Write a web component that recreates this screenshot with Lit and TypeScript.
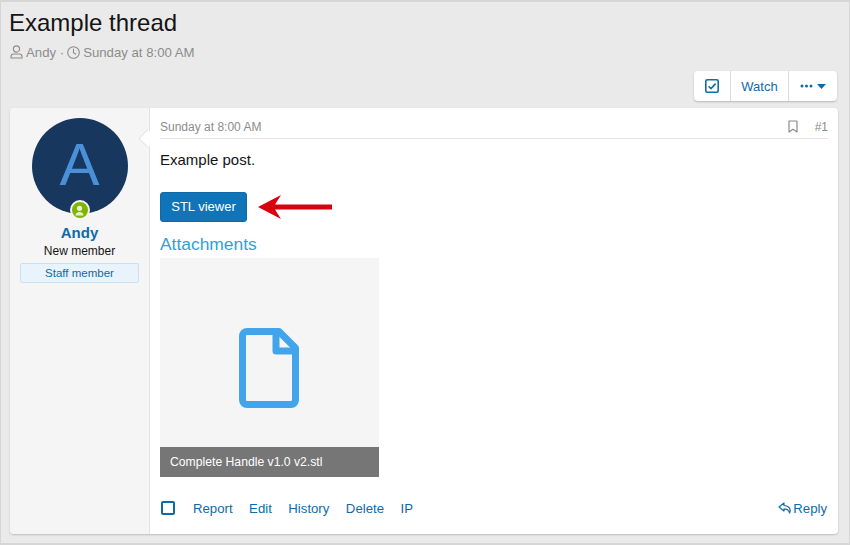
import { LitElement, html, css } from "lit";
import { customElement } from "lit/decorators.js";

@customElement("app-root")
export class AppRoot extends LitElement {
  static styles = css`
    :host { display: block; width: 850px; height: 545px; font-family: "Liberation Sans", Arial, sans-serif; }
    * { box-sizing: border-box; }
    .page { width: 850px; height: 545px; background: #eaeaea; border: 1px solid #d6d6d6; border-width: 2px 1px 2px 1px; padding: 0 11px 0 9px; display: flex; flex-direction: column; overflow: hidden; }
    h1 { margin: 6px 0 0 -1px; font-size: 24px; line-height: 30px; font-weight: 400; color: #141414; }
    .meta { display: flex; align-items: center; gap: 3px; margin-top: 5px; height: 18px; font-size: 13.2px; color: #8c8c8c; }
    .meta svg { display: block; }
    .tools { align-self: flex-end; display: flex; height: 30px; margin: 10px 1px 0 0; background: #fff; border-radius: 4px; box-shadow: 0 1px 2px rgba(0,0,0,.22); color: #0f6aa8; font-size: 13px; }
    .tools > div { display: flex; align-items: center; justify-content: center; border-left: 1px solid #dcdcdc; }
    .tools > div:first-child { border-left: 0; width: 36px; }
    .watch { width: 58px; }
    .more { width: 49px; gap: 4px; }
    .card { margin-top: 7px; width: 828px; height: 426px; background: #fff; border-radius: 4px; box-shadow: 0 1px 2px rgba(0,0,0,.2); display: flex; }
    .side { width: 140px; flex: none; background: #f5f5f5; border-right: 1px solid #e3e3e3; border-radius: 4px 0 0 4px; display: flex; flex-direction: column; align-items: center; padding-top: 10px; position: relative; }
    .side::after { content: ""; position: absolute; right: -5px; top: 24px; width: 12px; height: 12px; background: #fff; border-left: 1px solid #e3e3e3; border-bottom: 1px solid #e3e3e3; transform: rotate(45deg); }
    .avatar { width: 96px; height: 96px; border-radius: 50%; background: #17375e; color: #4a90d9; font-size: 60px; line-height: 94px; text-align: center; position: relative; }
    .online { position: absolute; left: 38px; bottom: -6px; width: 20px; height: 20px; border-radius: 50%; background: #7fb400; border: 2.5px solid #f5f5f5; display: flex; align-items: center; justify-content: center; }
    .name { margin-top: 9px; font-size: 15px; line-height: 20px; font-weight: 700; color: #0f6aa8; }
    .role { font-size: 12px; line-height: 16px; color: #141414; margin-top: 0; }
    .badge { margin-top: 4px; width: 119px; height: 20px; border: 1px solid #c8e2f5; background: #e8f3fc; border-radius: 2px; color: #0f6aa8; font-size: 11.5px; line-height: 18px; text-align: center; }
    .main { flex: 1; display: flex; flex-direction: column; padding: 9px 10px 0 10px; min-width: 0; }
    .head { display: flex; align-items: center; justify-content: space-between; height: 19px; padding-bottom: 2px; border-bottom: 1px solid #e6e6e6; font-size: 12px; color: #8c8c8c; box-sizing: content-box; }
    .head .r { display: flex; align-items: center; gap: 17px; }
    .text { margin-top: 12px; font-size: 15px; line-height: 18px; color: #141414; }
    .btn-row { display: flex; align-items: center; margin-top: 23px; }
    .btn { width: 87px; height: 30px; border-radius: 3px; background: #1074b8; border: 1px solid #0f6aa8; color: #fff; font-size: 13px; line-height: 28px; text-align: center; }
    .arrow { margin-left: 11px; display: block; }
    .att { margin-top: 10px; height: 24px; font-size: 17.4px; line-height: 24px; color: #2da1e0; }
    .thumb { margin-top: 2px; width: 219px; height: 219px; background: #f5f5f5; display: flex; flex-direction: column; }
    .thumb .ic { flex: 1; display: flex; align-items: center; justify-content: center; padding: 30px 1px 0 0; }
    .cap { height: 30px; background: #767676; color: #fff; font-size: 12.2px; line-height: 30px; padding-left: 10px; }
    .foot { display: flex; align-items: center; margin-top: 21px; height: 20px; font-size: 13.2px; color: #0f6aa8; }
    .foot .c { width: 14px; height: 14px; border: 2px solid #0f6aa8; border-radius: 2px; margin-left: 1px; margin-right: 18px; }
    .foot .l { margin-right: 16.500px; }
    .reply { margin-left: auto; margin-right: 1px; display: flex; align-items: center; gap: 1px; }
  `;

  render() {
    return html`
      <div class="page">
        <h1>Example thread</h1>
        <div class="meta">
          <svg width="13" height="14" viewBox="0 0 13 14" fill="none" stroke="#8c8c8c" stroke-width="1.1"><circle cx="6.5" cy="4" r="3.1"/><path d="M1 13v-1.6C1 9.8 2.2 9 3.6 9h5.8c1.4 0 2.6.8 2.6 2.4V13z" stroke-linejoin="round"/></svg>
          <span>Andy ·</span>
          <svg width="13" height="13" viewBox="0 0 13 13" fill="none" stroke="#8c8c8c" stroke-width="1.1"><circle cx="6.5" cy="6.5" r="5.8"/><path d="M6.5 2.8v3.9l2.6 1.6"/></svg>
          <span>Sunday at 8:00 AM</span>
        </div>
        <div class="tools">
          <div><svg width="14" height="14" viewBox="0 0 14 14" fill="none" stroke="#0f6aa8" stroke-width="1.6"><rect x=".8" y=".8" width="12.4" height="12.4" rx="1.5"/><path d="M3.6 7.2l2.4 2.4 4.6-5"/></svg></div>
          <div class="watch">Watch</div>
          <div class="more">
            <svg width="13" height="4" viewBox="0 0 13 4" fill="#0f6aa8"><circle cx="2" cy="2" r="1.5"/><circle cx="6.5" cy="2" r="1.5"/><circle cx="11" cy="2" r="1.5"/></svg>
            <svg width="9" height="5" viewBox="0 0 9 5" fill="#0f6aa8"><path d="M0 0h9L4.5 5z"/></svg>
          </div>
        </div>
        <div class="card">
          <div class="side">
            <div class="avatar">A
              <div class="online"><svg width="11" height="11" viewBox="0 0 11 11" fill="#e8f2d0"><circle cx="5.500" cy="3.300" r="2.600"/><path d="M1.500 10.500c0-2.300 1.600-3.600 4-3.600s4 1.300 4 3.600z"/></svg></div>
            </div>
            <div class="name">Andy</div>
            <div class="role">New member</div>
            <div class="badge">Staff member</div>
          </div>
          <div class="main">
            <div class="head">
              <span>Sunday at 8:00 AM</span>
              <span class="r">
                <svg width="10" height="13" viewBox="0 0 10 13" fill="none" stroke="#8c8c8c" stroke-width="1.2"><path d="M1 1h8v11L5 9.2 1 12z" stroke-linejoin="round"/></svg>
                <span>#1</span>
              </span>
            </div>
            <div class="text">Example post.</div>
            <div class="btn-row">
              <div class="btn">STL viewer</div>
              <svg class="arrow" width="74" height="24" viewBox="0 0 74 24"><path d="M0 12L23 0l-6 9.500h57v5H17l6 9.500z" fill="#d8000f"/></svg>
            </div>
            <div class="att">Attachments</div>
            <div class="thumb">
              <div class="ic">
                <svg width="60" height="80" viewBox="0 0 60 80" fill="none" stroke="#42a5ec" stroke-width="7" stroke-linejoin="round"><path d="M8 3.500h32L56.500 20v52a4.500 4.500 0 0 1-4.500 4.500H8A4.500 4.500 0 0 1 3.500 72V8A4.500 4.500 0 0 1 8 3.500z"/><path d="M37 4v19h19"/></svg>
              </div>
              <div class="cap">Complete Handle v1.0 v2.stl</div>
            </div>
            <div class="foot">
              <div class="c"></div>
              <span class="l">Report</span><span class="l">Edit</span><span class="l">History</span><span class="l">Delete</span><span class="l">IP</span>
              <span class="reply">
                <svg width="14" height="12" viewBox="0 0 14 12" fill="none" stroke="#0f6aa8" stroke-width="1.2" stroke-linejoin="round"><path d="M6 1L1 5l5 4V6.800c3 0 5 .7 5.500 4.200 1.500-3 .5-7.200-5.500-7.500z"/></svg>
                Reply
              </span>
            </div>
          </div>
        </div>
      </div>
    `;
  }
}
